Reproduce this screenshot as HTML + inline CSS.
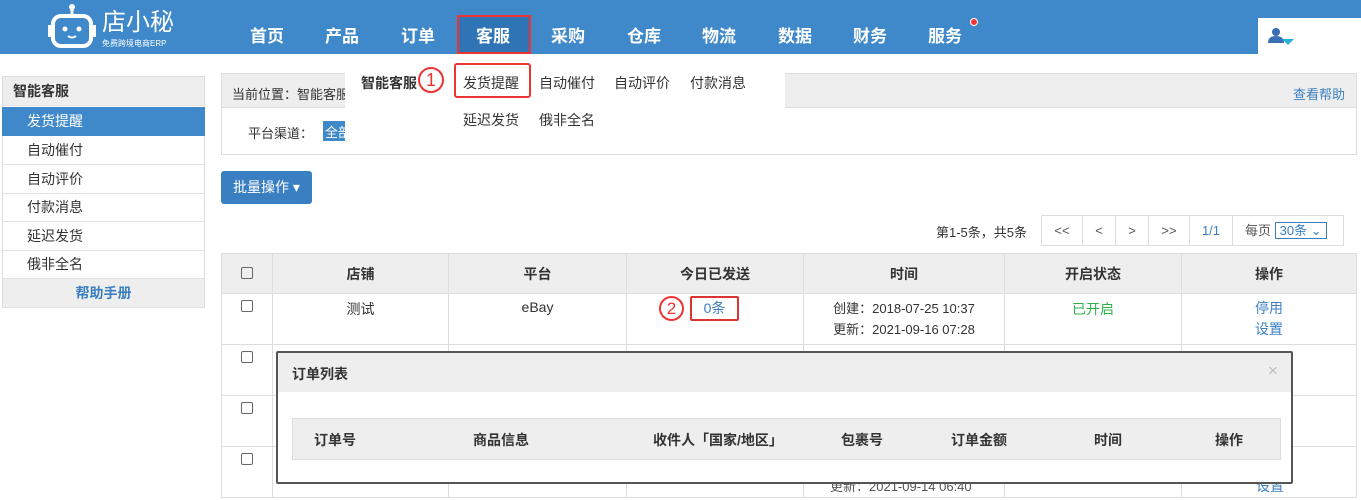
<!DOCTYPE html>
<html><head><meta charset="utf-8"><style>
*{margin:0;padding:0;box-sizing:border-box}
body{width:1361px;height:500px;overflow:hidden;background:#fff;font-family:"Liberation Sans","Noto Sans CJK SC",sans-serif;font-size:14px;color:#333;position:relative}
.a{position:absolute}
.hdr{left:0;top:0;width:1361px;height:54px;background:#3f89ca}
.nav{top:22px;color:#fff;font-weight:bold;font-size:17px}
.sb{left:2px;width:203px;height:29px;border-bottom:1px solid #e2e2e2;padding-left:24px;line-height:28px;font-size:14px;border-left:1px solid #ddd;border-right:1px solid #ddd}
table{border-collapse:collapse}
td,th{border:1px solid #ddd;text-align:center;font-size:14px}
th{background:#eee;font-weight:bold;height:40px}
td{height:51px;vertical-align:top;padding-top:5px}
.cb{display:inline-block;width:12px;height:12px;border:1px solid #666;border-radius:2px}
.pg{top:215px;height:31px;border:1px solid #ddd;line-height:29px;text-align:center;color:#555;font-size:13px}
</style></head><body>
<div class="a hdr"></div>
<svg class="a" style="left:47px;top:2px" width="50" height="48" viewBox="0 0 50 48"><circle cx="25" cy="5" r="3" fill="#fff"/><rect x="23.5" y="6" width="3" height="8" fill="#fff"/><rect x="6" y="14" width="38" height="30" rx="8" fill="none" stroke="#fff" stroke-width="4"/><rect x="1" y="23" width="4" height="12" fill="#fff"/><rect x="45" y="23" width="4" height="12" fill="#fff"/><circle cx="18" cy="27" r="2.5" fill="#fff"/><circle cx="32" cy="27" r="2.5" fill="#fff"/><path d="M21 34q4 3 8 0" stroke="#fff" stroke-width="2" fill="none"/></svg>
<div class="a" style="left:102px;top:10px;color:#fff;font-size:24px;line-height:26px">店小秘</div>
<div class="a" style="left:102px;top:38px;color:#fff;font-size:8px">免费跨境电商ERP</div>
<div class="a" style="left:457px;top:15px;width:74px;height:39px;background:#2f74b5;border:2px solid #e33"></div>
<div class="a nav" style="left:250px">首页</div><div class="a nav" style="left:325px">产品</div><div class="a nav" style="left:401px">订单</div><div class="a nav" style="left:476px">客服</div><div class="a nav" style="left:551px">采购</div><div class="a nav" style="left:627px">仓库</div><div class="a nav" style="left:702px">物流</div><div class="a nav" style="left:778px">数据</div><div class="a nav" style="left:853px">财务</div><div class="a nav" style="left:928px">服务</div>
<div class="a" style="left:970px;top:18px;width:8px;height:8px;border-radius:50%;background:#e33;border:1px solid #fff"></div>
<div class="a" style="left:1258px;top:18px;width:103px;height:36px;background:#fff"></div>
<svg class="a" style="left:1268px;top:27px" width="28" height="20"><circle cx="8" cy="5" r="4" fill="#3a6fb3"/><path d="M0 16q0-7 8-7t8 7z" fill="#3a6fb3"/><path d="M14 12h12l-6 6z" fill="#2ab0d8"/></svg>

<div class="a" style="left:2px;top:76px;width:203px;height:232px;border:1px solid #ddd"></div>
<div class="a sb" style="top:77px;background:#eee;padding-left:10px;font-weight:bold">智能客服</div>
<div class="a sb" style="top:107px;background:#3f89ca;color:#fff;border-color:#3f89ca">发货提醒</div>
<div class="a sb" style="top:136px">自动催付</div>
<div class="a sb" style="top:165px">自动评价</div>
<div class="a sb" style="top:193px">付款消息</div>
<div class="a sb" style="top:222px">延迟发货</div>
<div class="a sb" style="top:250px">俄非全名</div>
<div class="a sb" style="top:279px;background:#eee;color:#3a7fc1;font-weight:bold;text-align:center;padding:0">帮助手册</div>

<div class="a" style="left:221px;top:73px;width:1136px;height:82px;border:1px solid #ddd"></div>
<div class="a" style="left:222px;top:74px;width:1134px;height:34px;background:#eee;border-bottom:1px solid #ddd"></div>
<div class="a" style="left:232px;top:84px;font-size:13px">当前位置：智能客服</div>
<div class="a" style="left:1293px;top:84px;font-size:13px;color:#3a7fc1">查看帮助</div>
<div class="a" style="left:248px;top:123px;font-size:13px">平台渠道：</div>
<div class="a" style="left:323px;top:121px;width:30px;height:20px;background:#3f89ca;color:#fff;font-size:13px;padding:1px 2px">全部</div>

<div class="a" style="left:345px;top:62px;width:440px;height:80px;background:#fff"></div>
<div class="a" style="left:361px;top:73px;font-weight:bold">智能客服</div>
<div class="a" style="left:418px;top:67px;width:26px;height:26px;border:2px solid #e33;border-radius:50%;color:#e33;text-align:center;font-size:18px;line-height:22px">1</div>
<div class="a" style="left:454px;top:63px;width:77px;height:35px;border:2px solid #e33;border-radius:3px"></div>
<div class="a" style="left:463px;top:73px">发货提醒</div><div class="a" style="left:539px;top:73px">自动催付</div><div class="a" style="left:614px;top:73px">自动评价</div><div class="a" style="left:690px;top:73px">付款消息</div>
<div class="a" style="left:463px;top:110px">延迟发货</div><div class="a" style="left:539px;top:110px">俄非全名</div>

<div class="a" style="left:221px;top:171px;width:91px;height:33px;background:#3a7fc1;border-radius:3px;color:#fff;line-height:32px;text-align:center">批量操作 ▾</div>

<div class="a" style="left:936px;top:222px;font-size:13px">第1-5条，共5条</div>
<div class="a pg" style="left:1041px;width:42px">&lt;&lt;</div><div class="a pg" style="left:1082px;width:34px">&lt;</div><div class="a pg" style="left:1115px;width:34px">&gt;</div><div class="a pg" style="left:1148px;width:42px">&gt;&gt;</div><div class="a pg" style="left:1189px;width:44px;color:#3a7fc1">1/1</div><div class="a pg" style="left:1232px;width:112px;text-align:left;padding-left:12px">每页 <span style="border:1px solid #3a7fc1;color:#3a7fc1;padding:0 4px">30条 ⌄</span></div>

<table class="a" style="left:221px;top:253px;width:1136px">
<tr><th style="width:51px"><span class="cb"></span></th><th style="width:176px">店铺</th><th style="width:178px">平台</th><th style="width:177px">今日已发送</th><th style="width:201px">时间</th><th style="width:177px">开启状态</th><th>操作</th></tr>
<tr><td><span class="cb"></span></td><td>测试</td><td>eBay</td><td></td><td style="font-size:13px;line-height:21px;padding-top:4px">创建：2018-07-25 10:37<br>更新：2021-09-16 07:28</td><td style="color:#2bb34a">已开启</td><td style="color:#3a7fc1;line-height:21px;padding-top:4px">停用<br>设置</td></tr>
<tr><td><span class="cb"></span></td><td></td><td></td><td></td><td></td><td></td><td></td></tr>
<tr><td><span class="cb"></span></td><td></td><td></td><td></td><td></td><td></td><td></td></tr>
<tr><td><span class="cb"></span></td><td></td><td></td><td></td><td></td><td></td><td></td></tr>
</table>
<div class="a" style="left:830px;top:476px;font-size:13px;color:#555">更新：2021-09-14 06:40</div>
<div class="a" style="left:1256px;top:476px;color:#3a7fc1">设置</div>
<div class="a" style="left:659px;top:296px;width:25px;height:25px;border:2px solid #e33;border-radius:50%;color:#e33;text-align:center;font-size:17px;line-height:21px">2</div>
<div class="a" style="left:690px;top:296px;width:49px;height:25px;border:2px solid #d33;border-radius:2px;color:#3a7fc1;text-align:center;line-height:21px">0条</div>

<div class="a" style="left:276px;top:351px;width:1017px;height:133px;background:#fff;border:2px solid #555;border-radius:2px"></div>
<div class="a" style="left:278px;top:353px;width:1013px;height:39px;background:#eee"></div>
<div class="a" style="left:292px;top:364px;font-weight:bold">订单列表</div>
<div class="a" style="left:1268px;top:361px;color:#bbb;font-size:17px">×</div>
<div class="a" style="left:292px;top:418px;width:989px;height:42px;background:#eee;border:1px solid #ddd"></div>
<div class="a" style="top:430px;left:314px;font-weight:bold">订单号</div><div class="a" style="top:430px;left:473px;font-weight:bold">商品信息</div><div class="a" style="top:430px;left:653px;font-weight:bold">收件人「国家/地区」</div><div class="a" style="top:430px;left:841px;font-weight:bold">包裹号</div><div class="a" style="top:430px;left:951px;font-weight:bold">订单金额</div><div class="a" style="top:430px;left:1094px;font-weight:bold">时间</div><div class="a" style="top:430px;left:1215px;font-weight:bold">操作</div>
</body></html>
